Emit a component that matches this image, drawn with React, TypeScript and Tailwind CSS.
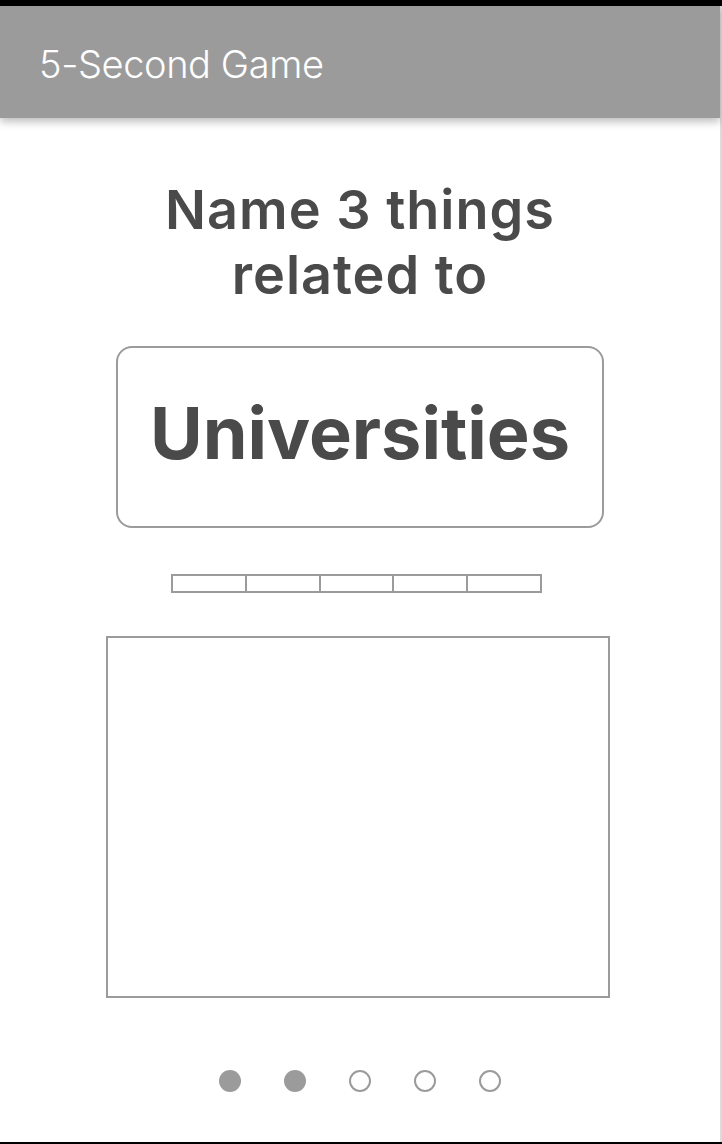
import React from "react";

const segments = [0, 1, 2, 3, 4];
const dots = [true, true, false, false, false];

export default function App() {
  return (
    <div className="w-[722px] h-[1144px] flex flex-col bg-black pt-[6px] pb-[2px] font-['Inter',sans-serif]">
      <div className="flex-1 flex bg-white">
        <main className="flex-1 flex flex-col items-center">
          <header className="w-full h-[112px] bg-[#9b9b9b] flex items-center pl-[39px] shadow-[0_4px_8px_rgba(0,0,0,0.25)] z-10">
            <h1 className="text-white text-[38px] font-light tracking-[-0.4px] pt-[4px]">5-Second Game</h1>
          </header>

          <h2 className="mt-[59px] text-center text-[#4a4a4a] text-[54px] leading-[65px] font-semibold tracking-[1px]">
            Name 3 things
            <br />
            related to
          </h2>

          <div className="mt-[39px] w-[488px] h-[182px] border-2 border-[#9b9b9b] rounded-[16px] flex justify-center pt-[45px]">
            <span className="text-[#4a4a4a] text-[72px] leading-[80px] font-bold">Universities</span>
          </div>

          <div className="mt-[46px] self-start ml-[171px] w-[371px] h-[19px] flex border-2 border-[#9b9b9b]">
            {segments.map((i) => (
              <div key={i} className="flex-1 border-l-2 border-[#9b9b9b] first:border-l-0" />
            ))}
          </div>

          <div className="mt-[43px] self-start ml-[106px] w-[504px] h-[362px] border-2 border-[#9b9b9b]" />

          <div className="mt-[72px] flex gap-[43px]">
            {dots.map((filled, i) => (
              <span
                key={i}
                className={
                  filled
                    ? "w-[22px] h-[22px] rounded-full bg-[#9b9b9b]"
                    : "w-[22px] h-[22px] rounded-full border-2 border-[#9b9b9b] bg-white"
                }
              />
            ))}
          </div>
        </main>
        <div className="w-[2px] bg-[#dcdcdc]" />
      </div>
    </div>
  );
}
